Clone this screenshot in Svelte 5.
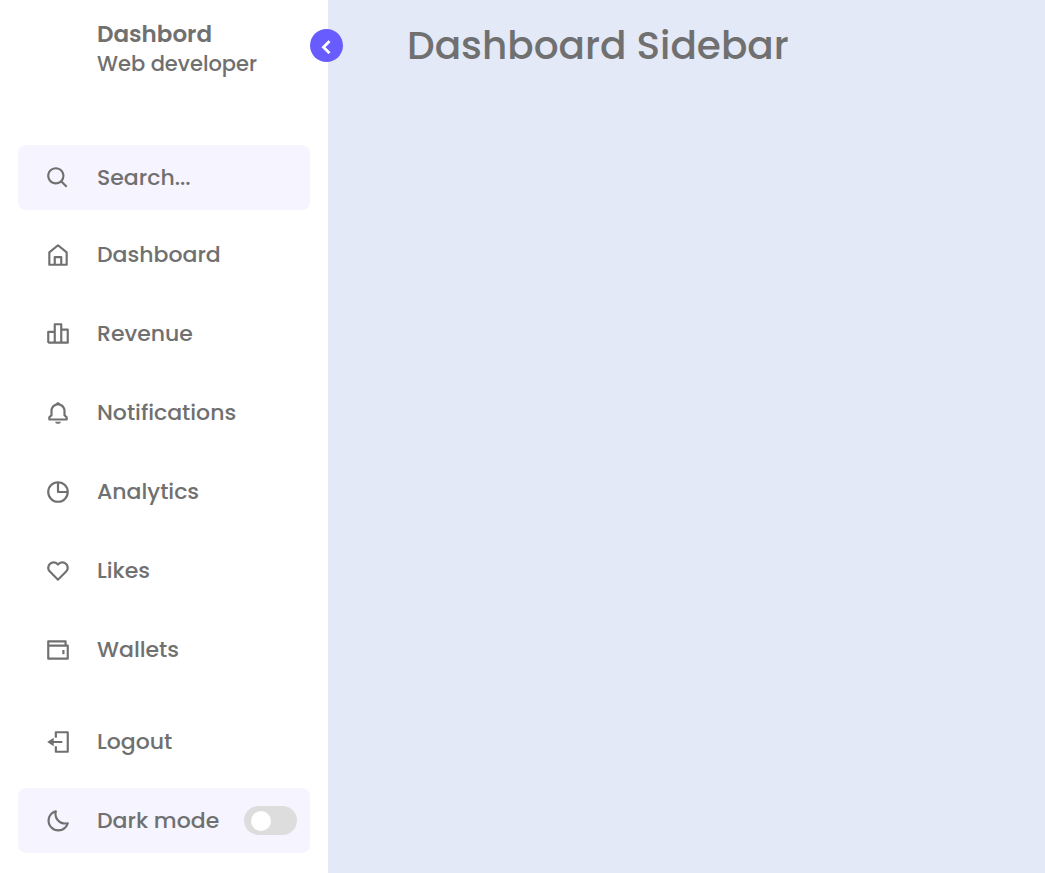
<script>
  let dark = $state(false);
  let closed = $state(false);

  const links = [
    { label: 'Dashboard', icon: 'home' },
    { label: 'Revenue', icon: 'bars' },
    { label: 'Notifications', icon: 'bell' },
    { label: 'Analytics', icon: 'pie' },
    { label: 'Likes', icon: 'heart' },
    { label: 'Wallets', icon: 'wallet' }
  ];

  const stroked = {
    home: 'M4 21V9.5L12 3l8 6.5V21zM9 21v-7h6v7',
    bars: 'M3 20V10h6M9 20V3h6v17M15 8h6v12H3',
    pie: 'M12 3a9 9 0 1 0 0 18a9 9 0 0 0 0-18zM12 3v9h9',
    wallet: 'M3 8h18v12H3zM3 9V4h16v4M17 12v4',
    logout: 'M10 8V3h11v18H10v-5M5 12h11'
  };

  const filled = {
    search:
      'M10 18a7.952 7.952 0 0 0 4.897-1.688l4.396 4.396 1.414-1.414-4.396-4.396A7.952 7.952 0 0 0 18 10c0-4.411-3.589-8-8-8s-8 3.589-8 8 3.589 8 8 8zm0-14c3.309 0 6 2.691 6 6s-2.691 6-6 6-6-2.691-6-6 2.691-6 6-6z',
    bell:
      'M19 13.586V10c0-3.217-2.185-5.927-5.145-6.742C13.562 2.52 12.846 2 12 2s-1.562.52-1.855 1.258C7.185 4.074 5 6.783 5 10v3.586l-1.707 1.707A.996.996 0 0 0 3 16v2a1 1 0 0 0 1 1h16a1 1 0 0 0 1-1v-2a.996.996 0 0 0-.293-.707L19 13.586zM19 17H5v-.586l1.707-1.707A.996.996 0 0 0 7 14v-4c0-2.757 2.243-5 5-5s5 2.243 5 5v4c0 .266.105.52.293.707L19 16.414V17zm-7 5a2.98 2.98 0 0 0 2.818-2H9.182A2.98 2.98 0 0 0 12 22z',
    heart:
      'M12 4.595a5.904 5.904 0 0 0-3.996-1.558 5.942 5.942 0 0 0-4.213 1.758c-2.353 2.363-2.352 6.059.002 8.412l7.332 7.332c.17.299.498.492.875.492a.99.99 0 0 0 .792-.409l7.415-7.415c2.354-2.354 2.354-6.049-.002-8.416a5.938 5.938 0 0 0-4.209-1.754A5.906 5.906 0 0 0 12 4.595zm6.791 1.61c1.563 1.571 1.564 4.025.002 5.588L12 18.586l-6.793-6.793c-1.562-1.563-1.561-4.017-.002-5.584.76-.756 1.754-1.172 2.799-1.172s2.035.416 2.789 1.17l.5.5a.999.999 0 0 0 1.414 0l.5-.5c1.512-1.509 4.074-1.505 5.584-.002z',
    logout: 'M2 12l6-4v8z',
    moon:
      'M20.742 13.045a8.088 8.088 0 0 1-2.077.271c-2.135 0-4.14-.83-5.646-2.336a8.025 8.025 0 0 1-2.064-7.723A1 1 0 0 0 9.73 2.034a10.014 10.014 0 0 0-4.489 2.582c-3.898 3.898-3.898 10.243 0 14.143a9.937 9.937 0 0 0 7.072 2.93 9.93 9.93 0 0 0 7.07-2.929 10.007 10.007 0 0 0 2.583-4.491 1.001 1.001 0 0 0-1.224-1.224zm-2.772 4.301a7.947 7.947 0 0 1-5.656 2.343 7.953 7.953 0 0 1-5.658-2.344c-3.118-3.119-3.118-8.195 0-11.314a7.923 7.923 0 0 1 2.06-1.483 10.027 10.027 0 0 0 2.89 7.848 9.972 9.972 0 0 0 7.848 2.891 8.036 8.036 0 0 1-1.484 2.059z'
  };
</script>

{#snippet icon(name)}
  <svg class="icon" viewBox="0 0 24 24" aria-hidden="true">
    {#if filled[name]}<path d={filled[name]} fill="currentColor" />{/if}
    {#if stroked[name]}
      <path d={stroked[name]} fill="none" stroke="currentColor" stroke-width="2" stroke-linejoin="round" />
    {/if}
  </svg>
{/snippet}

<div class="page" class:dark class:closed>
  <nav class="sidebar">
    <header>
      <div class="title">
        <span class="name">Dashbord</span>
        <span class="role">Web developer</span>
      </div>
      <button class="toggle" type="button" aria-label="Toggle sidebar" onclick={() => (closed = !closed)}>
        <svg viewBox="0 0 24 24" aria-hidden="true">
          <path
            d="M13.293 7.300 7.600 13l5.693 5.700 1.414-1.414L10.414 13l4.293-4.293z"
            fill="currentColor"
            stroke="currentColor"
            stroke-width=".6"
          />
        </svg>
      </button>
    </header>

    <label class="row box search">
      {@render icon('search')}
      <input type="text" placeholder="Search..." aria-label="Search" />
    </label>

    <ul>
      {#each links as link}
        <li><a class="row" href="#{link.icon}">{@render icon(link.icon)}<span>{link.label}</span></a></li>
      {/each}
    </ul>

    <div class="bottom">
      <a class="row" href="#logout">{@render icon('logout')}<span>Logout</span></a>
      <label class="row box mode">
        {@render icon('moon')}
        <span>Dark mode</span>
        <input type="checkbox" class="switch" bind:checked={dark} />
      </label>
    </div>
  </nav>

  <main>
    <h1>Dashboard Sidebar</h1>
  </main>
</div>

<style>
  :global(body) {
    margin: 0;
  }
  .page {
    --text: #707070;
    --body: #e4e9f7;
    --side: #fff;
    --box: #f6f5ff;
    --primary: #695cfe;
    display: flex;
    min-height: 100vh;
    background: var(--body);
    color: var(--text);
    font-family: Poppins, Inter, sans-serif;
    font-size: 22px;
    font-weight: 500;
  }
  .page.dark {
    --text: #ccc;
    --body: #18191a;
    --side: #242526;
    --box: #3a3b3c;
  }
  .sidebar {
    display: flex;
    flex-direction: column;
    flex: none;
    width: 328px;
    box-sizing: border-box;
    padding: 19px 18px 20px;
    background: var(--side);
  }
  .closed .sidebar {
    width: 115px;
  }
  .closed .title,
  .closed .row span,
  .closed .row input {
    display: none;
  }
  header {
    position: relative;
    min-height: 60px;
    padding-left: 79px;
  }
  .title {
    display: flex;
    flex-direction: column;
    line-height: 30px;
  }
  .name {
    font-weight: 600;
    font-size: 23px;
  }
  .role {
    font-size: 21px;
  }
  .toggle {
    position: absolute;
    top: 10px;
    right: -33px;
    display: grid;
    place-items: center;
    width: 33px;
    height: 33px;
    padding: 0;
    border: 0;
    border-radius: 50%;
    background: var(--primary);
    color: #fff;
    cursor: pointer;
  }
  .toggle svg {
    width: 28px;
    height: 28px;
  }
  .closed .toggle svg {
    transform: rotate(180deg);
  }
  .row {
    display: flex;
    align-items: center;
    height: 65px;
    box-sizing: border-box;
    padding: 0 13px 0 27px;
    gap: 26px;
    border-radius: 8px;
    color: inherit;
    text-decoration: none;
    white-space: nowrap;
  }
  .icon {
    flex: none;
    width: 26px;
    height: 26px;
  }
  .box {
    background: var(--box);
  }
  .search {
    margin-top: 66px;
  }
  .search input {
    flex: 1;
    min-width: 0;
    padding: 0;
    border: 0;
    outline: 0;
    background: none;
    color: inherit;
    font: inherit;
  }
  .search input::placeholder {
    color: var(--text);
    opacity: 1;
  }
  ul {
    display: flex;
    flex-direction: column;
    gap: 14px;
    margin: 12px 0 0;
    padding: 0;
    list-style: none;
  }
  .bottom {
    display: flex;
    flex-direction: column;
    gap: 14px;
    margin-top: auto;
  }
  .switch {
    appearance: none;
    flex: none;
    display: flex;
    align-items: center;
    width: 53px;
    height: 29px;
    margin: 0 0 0 auto;
    padding: 0 7px;
    box-sizing: border-box;
    border-radius: 15px;
    background: #ddd;
    cursor: pointer;
  }
  .switch::before {
    content: '';
    width: 20px;
    height: 20px;
    border-radius: 50%;
    background: #fff;
  }
  .switch:checked {
    justify-content: flex-end;
  }
  .mode {
    gap: 0;
  }
  .mode span {
    margin-left: 26px;
  }
  main {
    flex: 1;
    min-width: 0;
    padding: 16px 79px;
  }
  h1 {
    margin: 0;
    font-size: 39px;
    line-height: 60px;
    font-weight: 500;
  }
</style>
